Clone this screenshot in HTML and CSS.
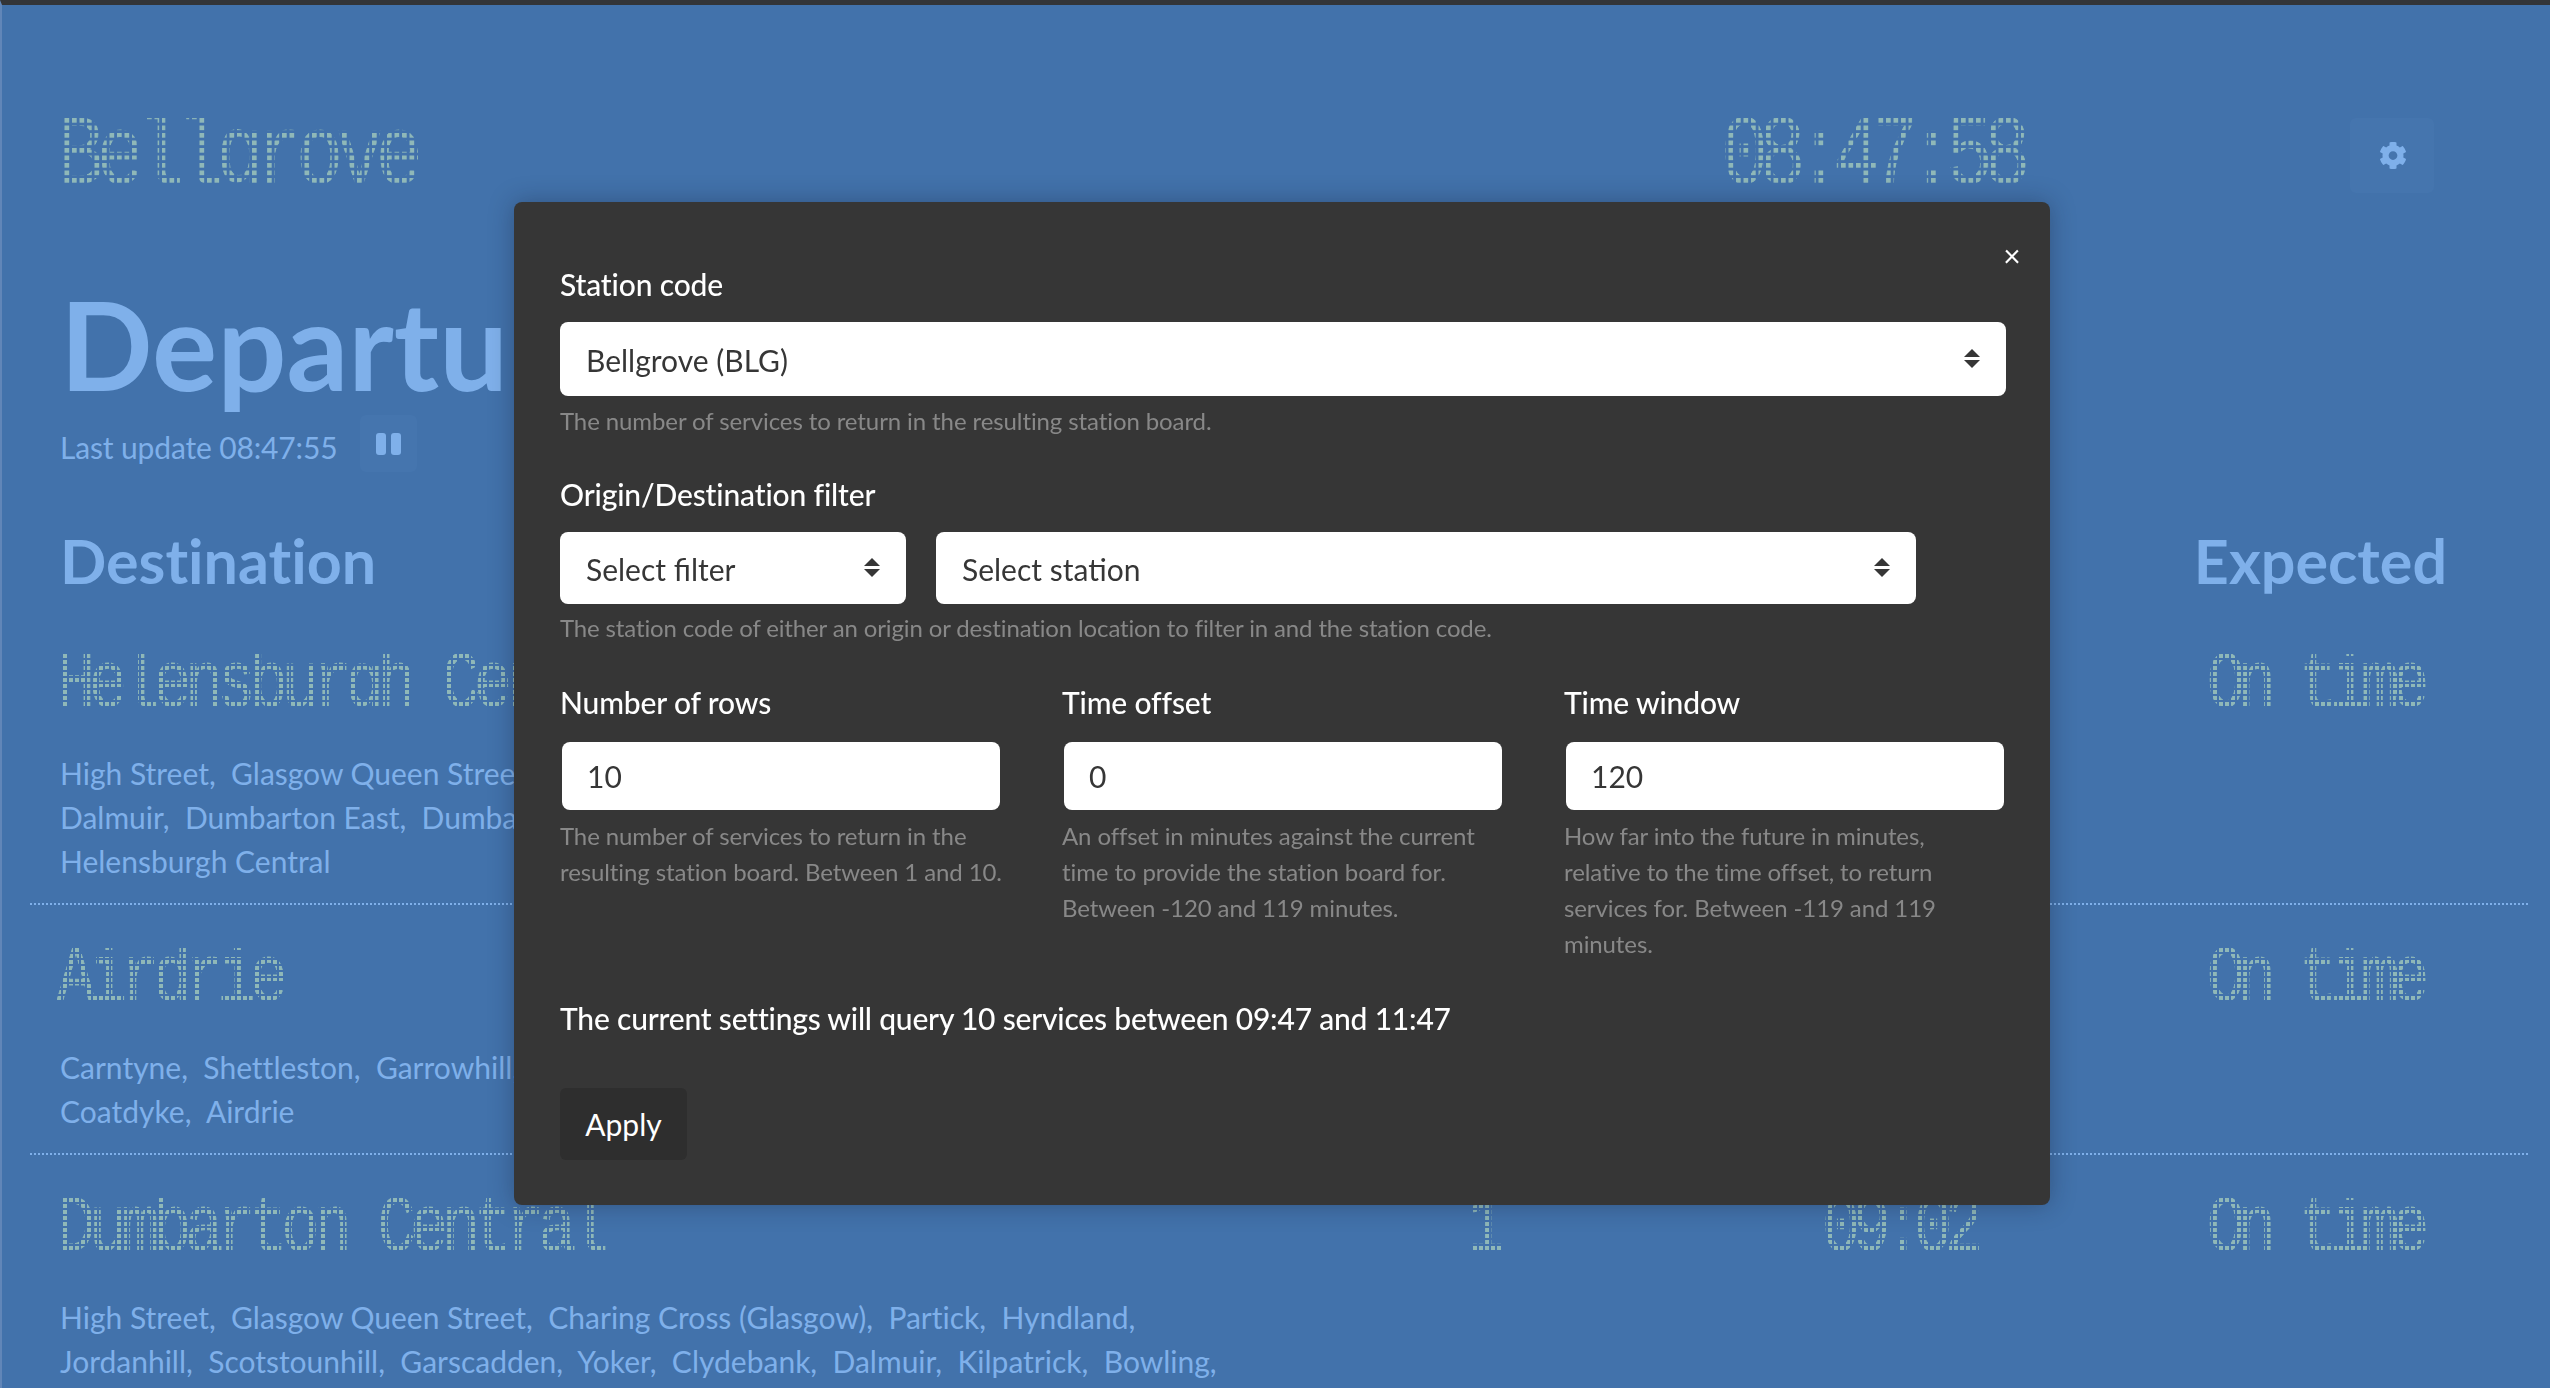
FILE: index.html
```html
<!DOCTYPE html>
<html lang="en">
<head>
    <meta charset="UTF-8">
    <meta name="viewport" content="width=device-width, initial-scale=1.0">
    <title>Departure board</title>
    <link rel="stylesheet" href="styles.css">
</head>
<body>
    <div class="board">
        <header class="board-top">
            <div class="dot dot-lg">Bellgrove</div>
            <div class="dot dot-lg dot-clock">08:47:58</div>
            <button class="ghost-btn settings-btn" aria-label="Settings">
                <svg class="gear" viewBox="0 0 512 512"><path d="M487.4 315.7l-42.6-24.6c4.3-23.2 4.3-47 0-70.2l42.6-24.6c4.9-2.8 7.1-8.6 5.5-14-11.1-35.6-30-67.8-54.7-94.6-3.8-4.1-10-5.1-14.8-2.3L380.8 110c-17.9-15.4-38.5-27.3-60.8-35.1V25.8c0-5.6-3.9-10.5-9.4-11.7-36.7-8.2-74.3-7.8-109.2 0-5.5 1.2-9.4 6.1-9.4 11.7V75c-22.2 7.9-42.8 19.8-60.8 35.1L88.7 85.5c-4.9-2.8-11-1.9-14.8 2.3-24.7 26.7-43.6 58.9-54.7 94.6-1.7 5.4.6 11.2 5.5 14L67.3 221c-4.3 23.2-4.3 47 0 70.2l-42.6 24.6c-4.9 2.8-7.1 8.6-5.5 14 11.1 35.6 30 67.8 54.7 94.6 3.8 4.1 10 5.1 14.8 2.3l42.6-24.6c17.9 15.4 38.5 27.3 60.8 35.1v49.2c0 5.6 3.9 10.5 9.4 11.7 36.7 8.2 74.3 7.8 109.2 0 5.5-1.2 9.4-6.1 9.4-11.7v-49.2c22.2-7.9 42.8-19.8 60.8-35.1l42.6 24.6c4.9 2.8 11 1.9 14.8-2.3 24.7-26.7 43.6-58.9 54.7-94.6 1.5-5.5-.7-11.3-5.6-14.1zM256 336c-44.1 0-80-35.9-80-80s35.9-80 80-80 80 35.9 80 80-35.9 80-80 80z"/></svg>
            </button>
        </header>

        <h1 class="title">Departures</h1>
        <div class="updated">
            <span>Last update 08:47:55</span>
            <button class="ghost-btn pause-btn" aria-label="Pause">
                <span class="pause-bar"></span><span class="pause-bar"></span>
            </button>
        </div>

        <div class="columns">
            <h2>Destination</h2>
            <h2 class="col-expected">Expected</h2>
        </div>

        <div class="service service-first">
            <div class="service-main">
                <div class="dot dot-sm">Helensburgh Central</div>
                <div></div>
                <div></div>
                <div class="dot dot-sm dot-tight">On time</div>
            </div>
            <p class="calling">High Street,&nbsp; Glasgow Queen Street,&nbsp; Charing Cross (Glasgow),&nbsp; Partick,&nbsp; Hyndland,<br>Dalmuir,&nbsp; Dumbarton East,&nbsp; Dumbarton Central,&nbsp; Cardross,&nbsp; Craigendoran,<br>Helensburgh Central</p>
        </div>
        <div class="service">
            <div class="service-main">
                <div class="dot dot-sm">Airdrie</div>
                <div></div>
                <div></div>
                <div class="dot dot-sm dot-tight">On time</div>
            </div>
            <p class="calling">Carntyne,&nbsp; Shettleston,&nbsp; Garrowhill,&nbsp; Easterhouse,&nbsp; Blairhill,<br>Coatdyke,&nbsp; Airdrie</p>
        </div>
        <div class="service">
            <div class="service-main">
                <div class="dot dot-sm">Dumbarton Central</div>
                <div class="dot dot-sm">1</div>
                <div class="dot dot-sm dot-tight">09:02</div>
                <div class="dot dot-sm dot-tight">On time</div>
            </div>
            <p class="calling">High Street,&nbsp; Glasgow Queen Street,&nbsp; Charing Cross (Glasgow),&nbsp; Partick,&nbsp; Hyndland,<br>Jordanhill,&nbsp; Scotstounhill,&nbsp; Garscadden,&nbsp; Yoker,&nbsp; Clydebank,&nbsp; Dalmuir,&nbsp; Kilpatrick,&nbsp; Bowling,</p>
        </div>
    </div>

    <div class="modal">
        <button class="close-btn" aria-label="Close">×</button>

        <label class="label">Station code</label>
        <div class="select select-full">
            <select><option>Bellgrove (BLG)</option></select>
            <svg class="arrows" viewBox="0 0 16 19"><path d="M8 0l8 8H0zM8 19l-8-8h16z"/></svg>
        </div>
        <p class="help">The number of services to return in the resulting station board.</p>

        <label class="label label-filter">Origin/Destination filter</label>
        <div class="filter-row">
            <div class="select select-filter">
                <select><option>Select filter</option></select>
                <svg class="arrows" viewBox="0 0 16 19"><path d="M8 0l8 8H0zM8 19l-8-8h16z"/></svg>
            </div>
            <div class="select select-station">
                <select><option>Select station</option></select>
                <svg class="arrows" viewBox="0 0 16 19"><path d="M8 0l8 8H0zM8 19l-8-8h16z"/></svg>
            </div>
        </div>
        <p class="help help-filter">The station code of either an origin or destination location to filter in and the station code.</p>

        <div class="fields">
            <div class="field">
                <label class="label">Number of rows</label>
                <input type="number" value="10">
                <p class="help">The number of services to return in the resulting station board. Between 1 and 10.</p>
            </div>
            <div class="field">
                <label class="label">Time offset</label>
                <input type="number" value="0">
                <p class="help">An offset in minutes against the current time to provide the station board for. Between -120 and 119 minutes.</p>
            </div>
            <div class="field">
                <label class="label">Time window</label>
                <input type="number" value="120">
                <p class="help">How far into the future in minutes, relative to the time offset, to return services for. Between -119 and 119 minutes.</p>
            </div>
        </div>

        <p class="summary">The current settings will query 10 services between 09:47 and 11:47</p>
        <button class="apply-btn">Apply</button>
    </div>
</body>
</html>
```

FILE: styles.css
```css
* {
    box-sizing: border-box;
}
html, body {
    height: 100%;
}
body {
    margin: 0;
    overflow: hidden;
    background: #4272ab;
    border-top: 5px solid #333538;
    border-left: 2px solid #6186b8;
    font-family: Lato, "Open Sans", sans-serif;
    font-variant-ligatures: none;
    color: #7fb0ea;
}
button {
    font-family: inherit;
    font-variant-ligatures: none;
    border: none;
    cursor: pointer;
}

/* dot matrix text: real text, painted through a grid of square dots */
.dot {
    margin-left: -3px;
    font-family: "Liberation Mono", monospace;
    white-space: nowrap;
    color: transparent;
    -webkit-text-stroke: 1px transparent;
    -webkit-background-clip: text;
    background-clip: text;
    background-repeat: repeat;
    transform-origin: left top;
}
.dot-lg {
    height: 65px;
    padding-top: 6px;
    font-size: 98px;
    letter-spacing: -9px;
    line-height: 65px;
    transform: scaleX(0.8);
    background-image: conic-gradient(from 270deg at 67% 67%, #8fb8b8 25%, transparent 0);
    background-size: 9.375px 7.5px;
}
.dot-clock {
    margin-left: -6px;
    letter-spacing: -12px;
}
.dot-sm {
    height: 52px;
    padding-top: 5px;
    font-size: 79px;
    letter-spacing: -7.3px;
    line-height: 52px;
    transform: scaleX(0.8);
    background-image: conic-gradient(from 270deg at 67% 67%, #8fb8b8 25%, transparent 0);
    background-size: 7.5px 6px;
}
.dot-tight {
    letter-spacing: -9px;
}

.board {
    padding: 113px 0 0 28px;
    width: 2526px;
}
.board-top {
    display: grid;
    grid-template-columns: 1667px 623px 84px;
    padding-left: 30px;
}
.ghost-btn {
    background: #4575ae;
    border-radius: 6px;
    display: flex;
    align-items: center;
    justify-content: center;
}
.settings-btn {
    height: 75px;
    width: 84px;
}
.gear {
    width: 28px;
    height: 29px;
    margin-left: 2px;
    fill: #7fb0ea;
}
.title {
    margin: 90px 0 0;
    padding-left: 30px;
    font-size: 122px;
    line-height: 1;
    font-weight: 700;
}
.updated {
    display: flex;
    align-items: center;
    gap: 23px;
    padding-left: 30px;
    margin-top: 13px;
    font-size: 30px;
    letter-spacing: -0.15px;
}
.pause-btn {
    width: 57px;
    height: 57px;
    margin: -3px 0 3px;
    gap: 5px;
}
.pause-bar {
    width: 10px;
    height: 22px;
    background: #7fb0ea;
    border-radius: 3px;
}
.columns {
    display: flex;
    justify-content: space-between;
    padding: 0 81px 0 30px;
    margin-top: 49px;
}
.columns h2 {
    margin: 0;
    font-size: 61px;
    line-height: 74px;
    font-weight: 700;
}

.service {
    padding: 43px 30px 20px;
    border-bottom: 2px dotted #7fb0ea;
}
.service-first {
    padding-top: 56px;
}
.service:last-child {
    border-bottom: none;
}
.service-main {
    display: grid;
    grid-template-columns: 1410px 355px 385px 400px;
}
.calling {
    margin: 45px 0 0;
    font-size: 30px;
    line-height: 44px;
    white-space: nowrap;
}

/* settings dialog */
.modal {
    position: fixed;
    left: 514px;
    top: 202px;
    width: 1536px;
    height: 1003px;
    padding: 0 46px;
    background: #363636;
    border-radius: 8px;
    box-shadow: 0 0 24px rgba(20, 30, 50, 0.35);
    color: #fff;
}
.close-btn {
    position: absolute;
    right: 23px;
    top: 38px;
    width: 30px;
    height: 30px;
    padding: 0;
    background: none;
    color: #fff;
    font-size: 30px;
    line-height: 30px;
}
.label {
    display: block;
    margin-top: 62px;
    font-size: 30px;
    letter-spacing: -0.15px;
    line-height: 40px;
    font-weight: 500;
}
.label-filter {
    margin-top: 35px;
}
.select {
    position: relative;
}
.select select, .field input {
    display: block;
    width: 100%;
    border: none;
    border-radius: 8px;
    background: #fff;
    color: #363636;
    font-family: inherit;
    font-size: 30px;
    padding: 0 25px;
    appearance: none;
}
.select select {
    height: 100%;
    padding: 2px 26px 0;
}
.select-full {
    margin: 18px -2px 0 0;
    height: 74px;
}
.filter-row {
    display: flex;
    gap: 30px;
    margin-top: 18px;
}
.select-filter {
    width: 346px;
    height: 72px;
}
.select-station {
    width: 980px;
    height: 72px;
}
.arrows {
    position: absolute;
    right: 26px;
    top: 50%;
    width: 16px;
    height: 19px;
    margin-top: -10px;
    fill: #363636;
    pointer-events: none;
}
.help {
    margin: 7px 0 0;
    font-size: 24px;
    letter-spacing: -0.1px;
    line-height: 36px;
    color: #888;
}
.help-filter {
    margin: 6px 0 1px;
    letter-spacing: -0.14px;
}
.fields {
    display: grid;
    grid-template-columns: repeat(3, 440px);
    gap: 62px;
    margin-top: 0;
}
.fields .label {
    margin-top: 35px;
}
.field input {
    height: 68px;
    margin: 20px 0 0 2px;
    width: 438px;
}
.field .help {
    margin: 8px -10px 0 0;
}
.field:nth-child(n+2) .help {
    margin-right: 0;
}
.summary {
    margin: 0;
    position: absolute;
    left: 46px;
    top: 796px;
    font-size: 30px;
    letter-spacing: -0.2px;
    line-height: 40px;
    font-weight: 500;
}
.apply-btn {
    position: absolute;
    left: 46px;
    top: 886px;
    width: 127px;
    height: 72px;
    border-radius: 6px;
    background: #2e2e2e;
    color: #fff;
    font-size: 30px;
}
```
